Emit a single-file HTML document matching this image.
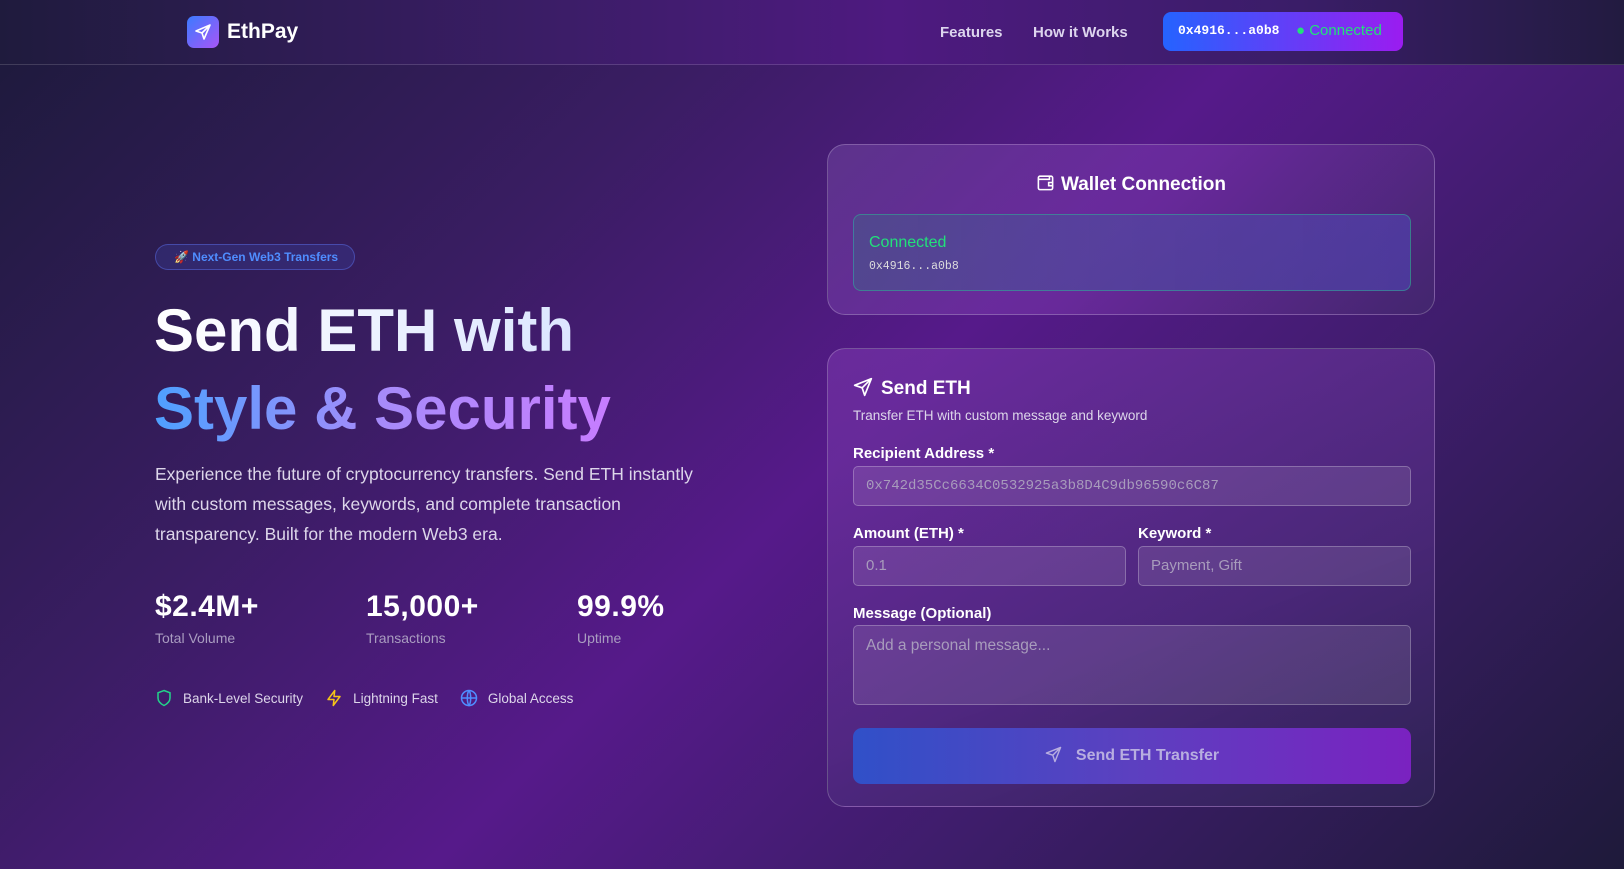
<!DOCTYPE html>
<html><head><meta charset="utf-8"><style>
*{box-sizing:border-box;margin:0;padding:0}
body{width:1624px;height:869px;overflow:hidden;font-family:"Liberation Sans",sans-serif;color:#fff;
background:linear-gradient(135deg,#1c1a3a 0%,#3a1d63 30%,#561a8a 52%,#3e1d6b 72%,#1e1a3a 100%);position:relative}
.nav{position:absolute;left:0;top:0;width:1624px;height:65px;border-bottom:1px solid rgba(255,255,255,.15);
background:linear-gradient(90deg,#1f1b3d 0%,#3c1d68 35%,#4e1a80 55%,#3a1d68 80%,#221b40 100%)}
.logo{position:absolute;left:187px;top:16px;width:32px;height:32px;border-radius:7px;background:linear-gradient(135deg,#3b7bff,#a855f7)}
.brand{position:absolute;left:227px;top:20px;font-size:21px;font-weight:bold}
.nl{position:absolute;top:24px;font-size:15px;color:#ddd5ee;font-weight:bold}
.wbtn{position:absolute;left:1163px;top:12px;width:240px;height:39px;border-radius:8px;background:linear-gradient(90deg,#2563ff,#9b1cf0)}
.mono{font-family:"Liberation Mono",monospace}
.card{position:absolute;left:827px;width:608px;border-radius:18px;border:1px solid rgba(255,255,255,.22);
background:linear-gradient(135deg,rgba(120,80,170,.45),rgba(130,60,180,.45) 50%,rgba(70,50,110,.45))}
.lbl{position:absolute;left:25px;font-size:15px;font-weight:bold}
.inp{position:absolute;height:40px;border-radius:5px;border:1px solid rgba(255,255,255,.25);background:rgba(255,255,255,.1);color:#a89cbc;font-size:15px;padding:0 12px;line-height:38px}
.stat{position:absolute;top:590px;font-size:30px;font-weight:bold;letter-spacing:.5px}
</style></head><body>
<div class="nav">
<div class="logo"><svg width="32" height="32" viewBox="0 0 32 32"><path d="M23 9 L9 15 L15 17 L17 23 Z M15 17 L23 9" fill="none" stroke="#fff" stroke-width="1.6" stroke-linejoin="round"/></svg></div>
<div class="brand">EthPay</div>
<div class="nl" style="left:940px">Features</div>
<div class="nl" style="left:1033px">How it Works</div>
<div class="wbtn"><span class="mono" style="position:absolute;left:15px;top:11px;font-size:13px;font-weight:bold">0x4916...a0b8</span><span style="position:absolute;left:133px;top:10px;font-size:15px;color:#22e07a">● Connected</span></div>
</div>

<div style="position:absolute;left:155px;top:244px;width:200px;height:26px;border-radius:13px;border:1px solid rgba(90,110,230,.5);background:rgba(60,70,170,.3);font-size:12px;font-weight:bold;color:#4f8dff;line-height:24px;padding-left:18px">🚀 Next-Gen Web3 Transfers</div>
<div style="position:absolute;left:154px;top:292px;font-size:60px;font-weight:bold;line-height:78px">
<div style="background:linear-gradient(90deg,#fff,#dce6ff);-webkit-background-clip:text;color:transparent;display:inline-block">Send ETH with</div><br>
<div style="background:linear-gradient(90deg,#4ea0ff,#a78bfa 50%,#c77dff);-webkit-background-clip:text;color:transparent;display:inline-block">Style &amp; Security</div></div>
<div style="position:absolute;left:155px;top:459px;width:560px;font-size:17.5px;line-height:30px;color:#ddd6ea">Experience the future of cryptocurrency transfers. Send ETH instantly with custom messages, keywords, and complete transaction transparency. Built for the modern Web3 era.</div>
<div class="stat" style="left:155px">$2.4M+</div>
<div class="stat" style="left:366px">15,000+</div>
<div class="stat" style="left:577px">99.9%</div>
<div style="position:absolute;left:155px;top:630px;font-size:14px;color:#a99cc0">Total Volume</div>
<div style="position:absolute;left:366px;top:630px;font-size:14px;color:#a99cc0">Transactions</div>
<div style="position:absolute;left:577px;top:630px;font-size:14px;color:#a99cc0">Uptime</div>
<div style="position:absolute;left:155px;top:689px;font-size:13.5px;color:#ddd6ea;display:flex;align-items:center">
<svg width="18" height="18" viewBox="0 0 24 24" fill="none" stroke="#22d38a" stroke-width="2"><path d="M12 2 L20 5 V12 C20 17 16 20 12 22 C8 20 4 17 4 12 V5 Z"/></svg><span style="margin:0 22px 0 10px">Bank-Level Security</span>
<svg width="18" height="18" viewBox="0 0 24 24" fill="none" stroke="#f5c518" stroke-width="2" stroke-linejoin="round"><path d="M13 2 L4 14 H12 L11 22 L20 10 H12 Z"/></svg><span style="margin:0 22px 0 10px">Lightning Fast</span>
<svg width="18" height="18" viewBox="0 0 24 24" fill="none" stroke="#4f8dff" stroke-width="2"><circle cx="12" cy="12" r="10"/><path d="M2 12 H22 M12 2 C15 6 15 18 12 22 C9 18 9 6 12 2"/></svg><span style="margin-left:10px">Global Access</span></div>

<div class="card" style="top:144px;height:171px">
<div style="position:absolute;left:0;width:100%;top:28px;text-align:center;font-size:19px;font-weight:bold"><svg width="19" height="19" viewBox="0 0 24 24" fill="none" stroke="#fff" stroke-width="2" style="vertical-align:-2px;margin-right:6px"><rect x="3" y="4" width="18" height="17" rx="2"/><path d="M3 8 H17 V4 M21 12 H16 V16 H21"/></svg>Wallet Connection</div>
<div style="position:absolute;left:25px;top:69px;width:558px;height:77px;border-radius:8px;border:1px solid rgba(40,200,150,.45);background:linear-gradient(90deg,rgba(70,90,140,.55),rgba(80,70,180,.6))">
<div style="position:absolute;left:15px;top:19px;font-size:16px;color:#22e07a">Connected</div>
<div class="mono" style="position:absolute;left:15px;top:45px;font-size:11.5px;color:#ddd">0x4916...a0b8</div></div></div>

<div class="card" style="top:348px;height:459px;background:linear-gradient(160deg,rgba(130,60,180,.5),rgba(90,50,140,.5) 60%,rgba(50,40,90,.55))">
<div style="position:absolute;left:25px;top:28px;font-size:19px;font-weight:bold"><svg width="20" height="20" viewBox="0 0 24 24" fill="none" stroke="#fff" stroke-width="2" stroke-linejoin="round" style="vertical-align:-3px;margin-right:8px"><path d="M22 2 L2 10 L11 13 L14 22 Z M11 13 L22 2"/></svg>Send ETH</div>
<div style="position:absolute;left:25px;top:59px;font-size:13.5px;color:#ddd6ea">Transfer ETH with custom message and keyword</div>
<div class="lbl" style="top:96px">Recipient Address *</div>
<div class="inp mono" style="left:25px;top:117px;width:558px;font-size:14px">0x742d35Cc6634C0532925a3b8D4C9db96590c6C87</div>
<div class="lbl" style="top:176px">Amount (ETH) *</div>
<div class="lbl" style="top:176px;left:310px">Keyword *</div>
<div class="inp" style="left:25px;top:197px;width:273px">0.1</div>
<div class="inp" style="left:310px;top:197px;width:273px">Payment, Gift</div>
<div class="lbl" style="top:256px">Message (Optional)</div>
<div class="inp" style="left:25px;top:276px;width:558px;height:80px;line-height:20px;padding-top:10px;font-size:15.5px">Add a personal message...</div>
<div style="position:absolute;left:25px;top:379px;width:558px;height:56px;border-radius:9px;background:linear-gradient(90deg,#3050c8,#5c40c0 50%,#7a22c0);text-align:center;line-height:56px;font-size:16px;font-weight:bold;color:#b8aee0"><svg width="17" height="17" viewBox="0 0 24 24" fill="none" stroke="#b8aee0" stroke-width="2" stroke-linejoin="round" style="vertical-align:-3px;margin-right:14px"><path d="M22 2 L2 10 L11 13 L14 22 Z M11 13 L22 2"/></svg>Send ETH Transfer</div>
</div>
</body></html>
